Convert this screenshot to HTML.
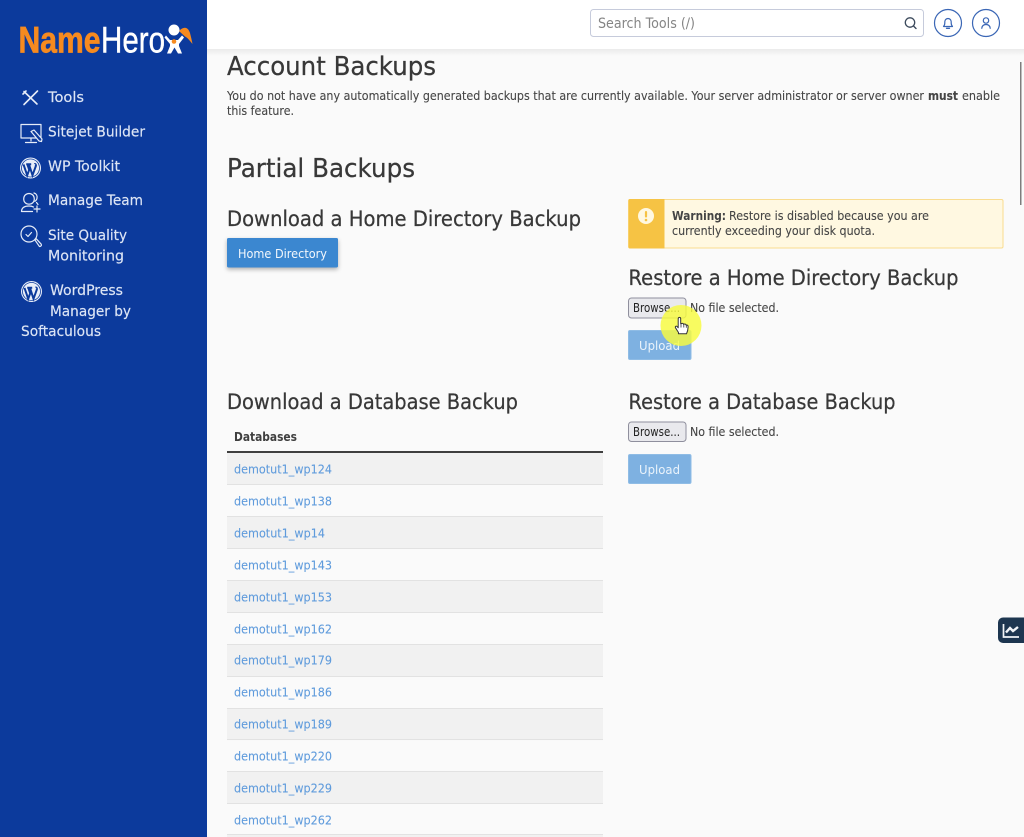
<!DOCTYPE html>
<html lang="en"><head><meta charset="utf-8"><title>Backups</title>
<style>
html,body{margin:0;padding:0;width:1024px;height:837px;overflow:hidden;background:#fafafa}
svg{display:block;position:absolute;left:0;top:0}
text{font-family:"DejaVu Sans","Liberation Sans",sans-serif}
.h{font-size:25.5px;fill:#383838;stroke:#383838;stroke-width:.25px}
.s{font-size:21.5px;fill:#383838;stroke:#383838;stroke-width:.25px}
.p{font-size:12.8px;fill:#454545;stroke:#454545;stroke-width:.1px}
.n{font-size:14.2px;fill:#dde5f5;stroke:#dde5f5;stroke-width:.15px}
.l{font-size:12.8px;fill:#5f9bdc;stroke:#5f9bdc;stroke-width:.08px}
.i{fill:none;stroke:#e6ecf8;stroke-width:1.2;stroke-linecap:round;stroke-linejoin:round}
</style></head><body>
<svg width="1024" height="837" viewBox="0 0 1024 837" xmlns="http://www.w3.org/2000/svg">
<defs>
<linearGradient id="hs" x1="0" y1="0" x2="0" y2="1"><stop offset="0" stop-color="#000" stop-opacity=".06"/><stop offset="1" stop-color="#000" stop-opacity="0"/></linearGradient>
<filter id="bs" x="-10%" y="-20%" width="120%" height="160%"><feDropShadow dx="0" dy="2" stdDeviation="2" flood-color="#000" flood-opacity=".3"/></filter>
<g id="wp"><circle cx="0" cy="0" r="10.5" fill="#e9eef9"/><circle cx="0" cy="0" r="9.4" fill="#0c3a9c"/><circle cx="0" cy="0" r="8.6" fill="#e9eef9"/><path d="M-7-3.600-3.300 7.300-1.300 1.800-2.900-2.900M-4.300-3.800H.7M-1.500-3.600 2 7.300 5.100-1.300C6-3.300 4.700-4.400 4.200-3.800" fill="none" stroke="#0c3a9c" stroke-width="2"/></g>
</defs>

<!-- content background -->
<rect width="1024" height="837" fill="#fafafa"/>

<!-- table -->
<rect x="227" y="453" width="376" height="31.5" fill="#f1f1f1"/>
<rect x="227" y="516.8" width="376" height="31.9" fill="#f1f1f1"/>
<rect x="227" y="580.6" width="376" height="31.9" fill="#f1f1f1"/>
<rect x="227" y="644.4" width="376" height="31.9" fill="#f1f1f1"/>
<rect x="227" y="708.2" width="376" height="31.9" fill="#f1f1f1"/>
<rect x="227" y="772" width="376" height="31.9" fill="#f1f1f1"/>
<rect x="227" y="835" width="376" height="2" fill="#f1f1f1"/>
<g fill="#e2e2e2">
<rect x="227" y="484" width="376" height="1"/><rect x="227" y="516" width="376" height="1"/><rect x="227" y="548" width="376" height="1"/><rect x="227" y="580" width="376" height="1"/><rect x="227" y="612" width="376" height="1"/><rect x="227" y="644" width="376" height="1"/><rect x="227" y="676" width="376" height="1"/><rect x="227" y="708" width="376" height="1"/><rect x="227" y="739" width="376" height="1"/><rect x="227" y="771" width="376" height="1"/><rect x="227" y="803" width="376" height="1"/><rect x="227" y="834" width="376" height="1"/>
</g>
<rect x="227" y="451" width="376" height="2" fill="#3f3f3f"/>
<text x="234" y="441" font-size="12.4" font-weight="700" fill="#3f3f3f" textLength="63" lengthAdjust="spacingAndGlyphs">Databases</text>
<g class="rows">
<text class="l" x="234" y="473.500" textLength="98" lengthAdjust="spacingAndGlyphs">demotut1_wp124</text>
<text class="l" x="234" y="505.500" textLength="98" lengthAdjust="spacingAndGlyphs">demotut1_wp138</text>
<text class="l" x="234" y="537.500" textLength="91" lengthAdjust="spacingAndGlyphs">demotut1_wp14</text>
<text class="l" x="234" y="569.500" textLength="98" lengthAdjust="spacingAndGlyphs">demotut1_wp143</text>
<text class="l" x="234" y="601.500" textLength="98" lengthAdjust="spacingAndGlyphs">demotut1_wp153</text>
<text class="l" x="234" y="633.500" textLength="98" lengthAdjust="spacingAndGlyphs">demotut1_wp162</text>
<text class="l" x="234" y="664.500" textLength="98" lengthAdjust="spacingAndGlyphs">demotut1_wp179</text>
<text class="l" x="234" y="696.500" textLength="98" lengthAdjust="spacingAndGlyphs">demotut1_wp186</text>
<text class="l" x="234" y="728.500" textLength="98" lengthAdjust="spacingAndGlyphs">demotut1_wp189</text>
<text class="l" x="234" y="760.500" textLength="98" lengthAdjust="spacingAndGlyphs">demotut1_wp220</text>
<text class="l" x="234" y="792.500" textLength="98" lengthAdjust="spacingAndGlyphs">demotut1_wp229</text>
<text class="l" x="234" y="824.500" textLength="98" lengthAdjust="spacingAndGlyphs">demotut1_wp262</text>
</g>

<!-- headings and paragraph -->
<text class="h" x="227" y="75" textLength="209" lengthAdjust="spacingAndGlyphs">Account Backups</text>
<text class="p" x="227" y="100" textLength="697" lengthAdjust="spacingAndGlyphs">You do not have any automatically generated backups that are currently available. Your server administrator or server owner</text>
<text class="p" x="928" y="100" font-weight="700" textLength="30" lengthAdjust="spacingAndGlyphs">must</text>
<text class="p" x="962" y="100" textLength="38" lengthAdjust="spacingAndGlyphs">enable</text>
<text class="p" x="227" y="115" textLength="67" lengthAdjust="spacingAndGlyphs">this feature.</text>
<text class="h" x="227" y="177" textLength="188" lengthAdjust="spacingAndGlyphs">Partial Backups</text>
<text class="s" x="227" y="226" textLength="354" lengthAdjust="spacingAndGlyphs">Download a Home Directory Backup</text>

<!-- home directory button -->
<rect x="227" y="238" width="111" height="29.5" rx="1.5" fill="#3a87d0" filter="url(#bs)"/>
<text x="238" y="258" font-size="12.8" fill="#f2f7fc" textLength="89" lengthAdjust="spacingAndGlyphs">Home Directory</text>

<!-- warning -->
<rect x="628.5" y="199.5" width="374.5" height="48.5" rx="1.5" fill="#fff8e1" stroke="#f9dc8f"/>
<path d="M628.500 200.500a1.500 1.500 0 0 1 1.500-1.500H664.500V248.500H630a1.500 1.500 0 0 1-1.500-1.500Z" fill="#f6c344"/>
<circle cx="646" cy="216" r="8" fill="#fff8e1"/>
<rect x="644.900" y="211" width="2.200" height="6.500" rx="1" fill="#f6c344"/>
<circle cx="646" cy="220" r="1.300" fill="#f6c344"/>
<text x="672" y="220" font-size="12.800" font-weight="700" fill="#444" textLength="54" lengthAdjust="spacingAndGlyphs">Warning:</text>
<text class="p" x="729" y="220" textLength="200" lengthAdjust="spacingAndGlyphs">Restore is disabled because you are</text>
<text class="p" x="672" y="235" textLength="203" lengthAdjust="spacingAndGlyphs">currently exceeding your disk quota.</text>

<!-- restore home -->
<text class="s" x="628.500" y="285" textLength="330" lengthAdjust="spacingAndGlyphs">Restore a Home Directory Backup</text>
<rect x="628.500" y="298" width="57.500" height="20" rx="3" fill="#e9e9ed" stroke="#8f8f9d"/>
<text x="633" y="312" font-size="12.300" fill="#222" textLength="47" lengthAdjust="spacingAndGlyphs">Browse...</text>
<text class="p" x="690" y="312" textLength="89" lengthAdjust="spacingAndGlyphs">No file selected.</text>
<rect x="628.500" y="330.500" width="62.500" height="29" rx="1.500" fill="#7eb1e1" stroke="#8fbce5"/>
<text x="639" y="350" font-size="12.800" fill="#eaf3fb" textLength="41" lengthAdjust="spacingAndGlyphs">Upload</text>

<!-- cursor highlight -->
<circle cx="681" cy="325.500" r="20.500" fill="#f8fb3e" fill-opacity=".82"/>
<path d="M678.500 332.500 675.500 327.800c-.8-1.300.9-2.300 1.800-1.100l.9 1.100V318.800c0-1.900 2.500-1.900 2.500 0V323.800c1.700-.8 2.600-.4 2.900.5 1.400-.6 2.300-.1 2.500.8 1.500-.3 2.100.5 2 1.800l-.4 3.400-1.200 3.500h-8.100Z" fill="#fff" stroke="#333" stroke-width="1" stroke-linejoin="round"/>
<path d="M681 324v3.500M683.800 324.500v3M686.300 325.300v2.400" stroke="#333" stroke-width=".8" fill="none"/>

<!-- database sections -->
<text class="s" x="227" y="409" textLength="291" lengthAdjust="spacingAndGlyphs">Download a Database Backup</text>
<text class="s" x="628.500" y="409" textLength="267" lengthAdjust="spacingAndGlyphs">Restore a Database Backup</text>
<rect x="628.500" y="422" width="57.500" height="19.500" rx="3" fill="#e9e9ed" stroke="#8f8f9d"/>
<text x="633" y="436" font-size="12.300" fill="#222" textLength="47" lengthAdjust="spacingAndGlyphs">Browse...</text>
<text class="p" x="690" y="436" textLength="89" lengthAdjust="spacingAndGlyphs">No file selected.</text>
<rect x="628.500" y="454.500" width="62.500" height="29" rx="1.500" fill="#7eb1e1" stroke="#8fbce5"/>
<text x="639" y="474" font-size="12.800" fill="#eaf3fb" textLength="41" lengthAdjust="spacingAndGlyphs">Upload</text>

<!-- scrollbar -->
<rect x="1020" y="62" width="1.500" height="143" fill="#7d7d7d"/>

<!-- floating chart button -->
<path d="M1024 617.500H1003a5 5 0 0 0-5 5V638a5 5 0 0 0 5 5h21Z" fill="#1d3650"/>
<path d="M1003.500 624v13H1019" fill="none" stroke="#f1f4f7" stroke-width="1.700"/>
<path d="M1006 632.500 1010 628 1013 631 1018 627" fill="none" stroke="#f1f4f7" stroke-width="2.400"/>

<!-- header -->
<rect x="207" y="49" width="817" height="7" fill="url(#hs)"/>
<rect x="207" y="0" width="817" height="49" fill="#fff"/>
<rect x="590.500" y="9.500" width="333" height="27" rx="3" fill="#fff" stroke="#c6cbdb"/>
<text x="598" y="28" font-size="14" fill="#858585" textLength="97" lengthAdjust="spacingAndGlyphs">Search Tools (/)</text>
<circle cx="910" cy="22.500" r="4.700" fill="none" stroke="#3c4a5c" stroke-width="1.300"/>
<path d="M913.500 26 916 28.500" stroke="#3c4a5c" stroke-width="1.400" stroke-linecap="round"/>
<circle cx="948" cy="23" r="13.500" fill="#fff" stroke="#3a66b5" stroke-width="1.200"/>
<path d="M943.500 26.500h9c-1-1-1.300-2-1.300-3.500v-1.300a3.200 3.200 0 0 0-6.400 0V23c0 1.500-.3 2.500-1.300 3.500Z" fill="none" stroke="#3a66b5" stroke-width="1.200" stroke-linejoin="round"/>
<path d="M946.500 28.300h3" stroke="#3a66b5" stroke-width="1.300" stroke-linecap="round"/>
<circle cx="986" cy="23" r="13.500" fill="#fff" stroke="#3a66b5" stroke-width="1.200"/>
<circle cx="986" cy="20.500" r="2.700" fill="none" stroke="#3a66b5" stroke-width="1.200"/>
<path d="M981.800 28.300c.3-2.800 2-3.800 4.200-3.800s3.900 1 4.200 3.800" fill="none" stroke="#3a66b5" stroke-width="1.200" stroke-linecap="round"/>

<!-- sidebar -->
<rect x="0" y="0" width="207" height="837" fill="#0c3a9c"/>

<!-- logo -->
<text x="18.500" y="52.500" font-size="37" font-weight="700" fill="#f68a1f" stroke="#f68a1f" stroke-width=".7" style="font-family:'Liberation Sans',sans-serif" textLength="82" lengthAdjust="spacingAndGlyphs">Name</text>
<text x="101" y="52.500" font-size="37" fill="#fff" stroke="#fff" stroke-width=".4" style="font-family:'Liberation Sans',sans-serif" textLength="64" lengthAdjust="spacingAndGlyphs">Hero</text>
<path d="M179 31C184 26 188 27 190 33 191 37 192 41 192.500 44 190 41 188 38 185 36.500Z" fill="#f68a1f"/>
<circle cx="174" cy="30" r="5.500" fill="#fff"/>
<path d="M166 35.500 170 40H178L182 35.500 184 37.500 179 44V46L182 53.500H178L174.500 47.500 171 53.500H167L170 46V44L164.500 37.500Z" fill="#fff"/>
<circle cx="174" cy="41.500" r="2.300" fill="#f68a1f"/>

<!-- nav icons -->
<g class="i">
<path d="M24 91.500 37 104M37.500 91 24 104.500M23 94 26 91" stroke-width="1.600"/>
<path d="M21 124.500h20v13.500H21ZM31 138v3M25.500 142.500h11"/>
<path d="M31 131.500 34 130 42 139 41.500 141.500 39 141Z" fill="#0c3a9c"/>
<path d="M29 193.500c-3.200 0-5.300 2.400-5.300 5.500 0 3 2.100 5.200 5.300 5.200s5.300-2.200 5.300-5.200c0-3.100-2.100-5.500-5.300-5.500ZM21.500 211.500c.2-4 3.300-5.500 7.500-5.500 1.800 0 3.300.3 4.500 1M21.500 211.500h11M34 193c2.500.7 3.500 2.800 3 5.300-.2 1.200-.9 2.200-2 3M36.500 202.500l1.500 2"/>
<path d="M37 206v6M34 209h6"/>
<circle cx="29" cy="234" r="8"/>
<path d="M26 234.500l2 2 3.500-4"/>
<path d="M34.800 239.800l1.500-1 5 5.500c.5 1.200-.8 2.700-2 2Z"/>
</g>
<use href="#wp" x="30.500" y="168"/>
<use href="#wp" x="31.500" y="291.500"/>

<!-- nav text -->
<text class="n" x="48" y="102" textLength="36" lengthAdjust="spacingAndGlyphs">Tools</text>
<text class="n" x="48" y="136.500" textLength="97" lengthAdjust="spacingAndGlyphs">Sitejet Builder</text>
<text class="n" x="48" y="171" textLength="72" lengthAdjust="spacingAndGlyphs">WP Toolkit</text>
<text class="n" x="48" y="205" textLength="95" lengthAdjust="spacingAndGlyphs">Manage Team</text>
<text class="n" x="48" y="240" textLength="79" lengthAdjust="spacingAndGlyphs">Site Quality</text>
<text class="n" x="48" y="260.500" textLength="76" lengthAdjust="spacingAndGlyphs">Monitoring</text>
<text class="n" x="50" y="295" textLength="73" lengthAdjust="spacingAndGlyphs">WordPress</text>
<text class="n" x="50" y="316" textLength="81" lengthAdjust="spacingAndGlyphs">Manager by</text>
<text class="n" x="21" y="336" textLength="80" lengthAdjust="spacingAndGlyphs">Softaculous</text>
</svg>
</body></html>
